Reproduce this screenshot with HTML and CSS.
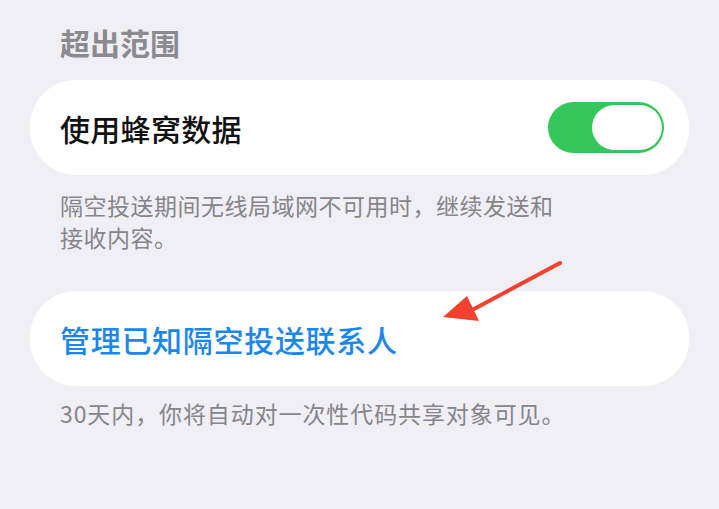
FILE: index.html
```html
<!DOCTYPE html>
<html lang="zh-CN">
<head>
    <meta charset="UTF-8">
    <meta name="viewport" content="width=device-width, initial-scale=1.0">
    <title>隔空投送</title>
    <link rel="stylesheet" href="styles.css">
</head>
<body>
    <div class="settings">
        <h2 class="group-title">超出范围</h2>

        <div class="card">
            <span class="card-label">使用蜂窝数据</span>
            <div class="toggle on">
                <div class="knob"></div>
            </div>
        </div>
        <p class="note">隔空投送期间无线局域网不可用时，继续发送和<br>接收内容。</p>

        <div class="card link-card">
            <span class="card-label link">管理已知隔空投送联系人</span>
        </div>
        <p class="note footer-note">30天内，你将自动对一次性代码共享对象可见。</p>

        <svg class="arrow" width="130" height="70" viewBox="0 0 130 70">
            <line x1="120" y1="8" x2="34" y2="54" stroke="#f4402e" stroke-width="4" stroke-linecap="round"/>
            <polygon points="3,62 27,41 39,66" fill="#f4402e"/>
        </svg>
    </div>
</body>
</html>
```

FILE: styles.css
```css
body {
    margin: 0;
    background-color: #f0eff5;
    font-family: "Noto Sans CJK SC", "Noto Sans", sans-serif;
}
.settings {
    position: relative;
    padding: 22px 30px 40px 30px;
}
.group-title {
    margin: 0 0 18px 30px;
    font-size: 30px;
    line-height: 40px;
    font-weight: bold;
    color: #8a8a8f;
}
.card {
    height: 95px;
    background: white;
    border-radius: 46px;
    display: flex;
    align-items: center;
    justify-content: space-between;
    padding: 0 25px 0 30px;
}
.card-label {
    font-size: 30px;
    font-weight: 500;
    color: #111;
    letter-spacing: 0.3px;
}
.card-label.link {
    color: #1b87ec;
    letter-spacing: 0.7px;
}
.toggle {
    width: 116px;
    height: 51px;
    border-radius: 26px;
    background-color: #e5e5ea;
    display: flex;
    align-items: center;
    padding: 0 2px;
    box-sizing: border-box;
}
.toggle.on {
    background-color: #35c759;
    justify-content: flex-end;
}
.knob {
    width: 70px;
    height: 45px;
    border-radius: 23px;
    background: white;
}
.note {
    margin: 14px 0 0 30px;
    font-size: 23px;
    line-height: 32px;
    letter-spacing: 0.5px;
    color: #85858a;
}
.link-card {
    margin-top: 38px;
}
.footer-note {
    margin-top: 11px;
    letter-spacing: 0.9px;
}
.arrow {
    position: absolute;
    left: 440px;
    top: 255px;
}
```
